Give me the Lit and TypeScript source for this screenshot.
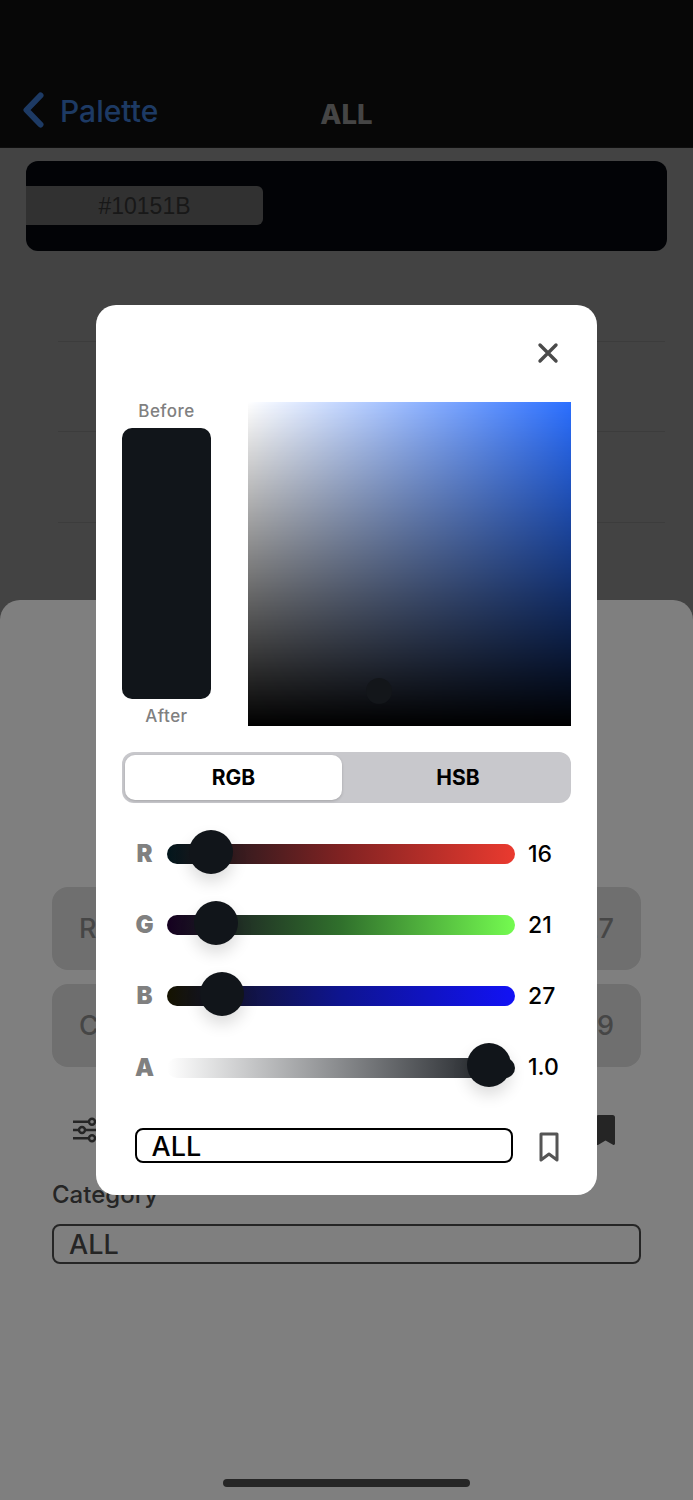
import { LitElement, html, css, svg } from "lit";
import { customElement } from "lit/decorators.js";

interface Channel { label: string; value: string; stops: string; thumb: number; }

const CHANNELS: Channel[] = [
  { label: "R", value: "16", stops: "#02161c, #802222 50%, #ea3a2f", thumb: 44 },
  { label: "G", value: "21", stops: "#150020, #30702c 50%, #74fb50", thumb: 49 },
  { label: "B", value: "27", stops: "#151300, #0e1490 50%, #1212f5", thumb: 55 },
  { label: "A", value: "1.0", stops: "rgba(17,21,26,0), #11151a", thumb: 322 },
];

@customElement("app-root")
export class AppRoot extends LitElement {
  static styles = css`
    :host {
      display: block;
      position: relative;
      width: 693px;
      height: 1500px;
      overflow: hidden;
      background: #868686;
      font-family: Inter, "Noto Sans", sans-serif;
      color: #000;
    }
    .nav {
      background: #0e0e0e;
      border-bottom: 1px solid #1c1c1c;
      position: relative;
      display: flex;
      align-items: flex-end;
      padding: 0 0 18px 22px;
      height: 129px;
      gap: 15px;
    }
    .nav svg { display: block; margin-bottom: 1px; }
    .back { font-size: 30px; line-height: 36px; font-weight: 500; color: #3b74c8; }
    .title {
      position: absolute;
      left: 0;
      right: 0;
      bottom: 17px;
      text-align: center;
      font-size: 27.5px;
      line-height: 32px;
      font-weight: 800;
      color: #8a8a8a;
    }
    .hex-card {
      margin: 13px 26px 0;
      height: 90px;
      border-radius: 12px;
      background: #04060c;
      display: flex;
      align-items: center;
    }
    .chip {
      width: 237px;
      height: 39px;
      box-sizing: border-box;
      padding-top: 2px;
      margin-bottom: 1px;
      border-radius: 0 6px 6px 0;
      background: #636363;
      display: flex;
      align-items: center;
      justify-content: center;
      font-family: "Liberation Sans", Arial, sans-serif;
      font-size: 23px;
      color: #303030;
    }
    .row {
      height: 90.5px;
      margin-left: 58px;
      margin-right: 28px;
      box-sizing: border-box;
      border-bottom: 1px solid #787878;
    }
    .sheet {
      position: absolute;
      left: 0;
      right: 0;
      top: 600px;
      bottom: 0;
      background: #ffffff;
      border-radius: 20px 20px 0 0;
      box-sizing: border-box;
      padding: 287px 52px 0;
      display: flex;
      flex-direction: column;
    }
    .info {
      height: 83px;
      margin-bottom: 14px;
      border-radius: 16px;
      background: #dedede;
      display: flex;
      align-items: center;
      justify-content: space-between;
      padding: 0 27px;
      font-size: 27px;
      font-weight: 500;
      color: #8c8c8c;
    }
    .tools {
      display: flex;
      justify-content: space-between;
      align-items: center;
      height: 31px;
      margin-top: 33px;
      padding: 0 26px 0 21px;
    }
    .tools svg { display: block; }
    .cat-label {
      margin-top: 36px;
      font-size: 24px;
      line-height: 28px;
      font-weight: 500;
      color: #4a4a4a;
    }
    .field {
      box-sizing: border-box;
      border: 2px solid #4a4a4a;
      border-radius: 8px;
      height: 40px;
      margin-top: 15px;
      padding-left: 15px;
      font-size: 27px;
      line-height: 37px;
      font-weight: 500;
      color: #4a4a4a;
    }
    .home {
      position: absolute;
      left: 223px;
      bottom: 13px;
      width: 247px;
      height: 8.5px;
      border-radius: 4.25px;
      background: #4c4c4c;
    }
    .scrim {
      position: absolute;
      inset: 0;
      background: rgba(0, 0, 0, 0.5);
    }
    .modal {
      position: absolute;
      left: 96px;
      top: 305px;
      width: 501px;
      height: 890px;
      box-sizing: border-box;
      background: #fff;
      border-radius: 20px;
      padding: 35px 26px 0;
      display: flex;
      flex-direction: column;
    }
    .close {
      align-self: flex-end;
      margin-right: 10px;
      height: 26px;
    }
    .close svg { display: block; }
    .pick {
      margin-top: 36px;
      display: grid;
      grid-template-columns: 89px 323.5px;
      justify-content: space-between;
    }
    .swatch-col {
      display: flex;
      flex-direction: column;
      align-items: center;
    }
    .cap {
      font-size: 17px;
      line-height: 18px;
      font-weight: 500;
      color: #808080;
      letter-spacing: 0.45px;
    }
    .swatch {
      width: 89px;
      height: 271px;
      margin: 8px 0;
      border-radius: 10px;
      background: #11151a;
    }
    .square {
      position: relative;
      width: 323.5px;
      height: 323.5px;
      background:
        linear-gradient(to bottom, rgba(0,0,0,0), #000),
        linear-gradient(to right, #fff, #2b6fff);
    }
    .cursor {
      position: absolute;
      left: 118.500px;
      top: 276px;
      width: 26px;
      height: 26px;
      border-radius: 50%;
      background: #13161a;
    }
    .segment {
      margin-top: 26.5px;
      height: 51px;
      box-sizing: border-box;
      padding: 3px;
      border-radius: 12px;
      background: #c8c8cc;
      display: grid;
      grid-template-columns: 217px 1fr;
      font-size: 21px;
      font-weight: 700;
    }
    .segment div {
      display: flex;
      align-items: center;
      justify-content: center;
    }
    .segment .off { padding-left: 6px; }
    .segment .on {
      background: #fff;
      border-radius: 10px;
      box-shadow: 0 1px 3px rgba(0,0,0,0.18);
    }
    .channels {
      margin-top: 15.5px;
      display: flex;
      flex-direction: column;
      padding-left: 12px;
    }
    .channel {
      height: 71.2px;
      display: grid;
      grid-template-columns: 33px 348px auto;
      align-items: center;
    }
    .ch-label {
      width: 21px;
      text-align: center;
      font-size: 24px;
      font-weight: 900;
      color: #808080;
      line-height: 1;
    }
    .track {
      position: relative;
      height: 20px;
      border-radius: 10px;
    }
    .thumb {
      position: absolute;
      top: -14.500px;
      width: 44px;
      height: 44px;
      margin-left: -22px;
      border-radius: 50%;
      background: #11151a;
      box-shadow: 0 8px 16px rgba(0,0,0,0.14);
    }
    .ch-value {
      padding-left: 13px;
      font-size: 23px;
      font-weight: 500;
      line-height: 1;
    }
    .save {
      margin-top: 25px;
      padding: 0 12.500px 0 13px;
      display: flex;
      align-items: center;
      justify-content: space-between;
    }
    .name {
      box-sizing: border-box;
      width: 378px;
      height: 35px;
      border: 2px solid #000;
      border-radius: 8px;
      padding-left: 14.500px;
      font-size: 27px;
      line-height: 33px;
      font-weight: 500;
    }
    .save svg { display: block; margin-top: 3px; }
  `;

  private slidersIcon() {
    return svg`<svg width="26" height="26" viewBox="0 0 26 26" fill="none" stroke="#4a4a4a" stroke-width="2.400">
      <path d="M0 4.700h16M0 13h6M12 13h14M0 21.300h16"/>
      <circle cx="19" cy="4.700" r="3"/><circle cx="9" cy="13" r="3"/><circle cx="19" cy="21.300" r="3"/>
    </svg>`;
  }

  render() {
    return html`
      <div class="nav">
        <svg width="23" height="36" viewBox="0 0 23 36" fill="none" stroke="#3b74c8" stroke-width="6" stroke-linecap="round" stroke-linejoin="round"><path d="M18.5 3.5 4.5 18l14 14.5"/></svg>
        <span class="back">Palette</span>
        <span class="title">ALL</span>
      </div>
      <div class="hex-card"><div class="chip">#10151B</div></div>
      <div class="row"></div>
      <div class="row"></div>
      <div class="row"></div>

      <div class="sheet">
        <div class="info"><span>RGB</span><span>27</span></div>
        <div class="info"><span>CMYK</span><span>89</span></div>
        <div class="tools">
          ${this.slidersIcon()}
          <svg width="19" height="30" viewBox="0 0 19 30" fill="#4a4a4a"><path d="M2.5 0h14A2.5 2.5 0 0 1 19 2.5v26c0 1.2-1 1.8-2 1.2L9.500 25.500 2 30c-1 .5-2-.2-2-1.300V2.500A2.500 2.500 0 0 1 2.500 0z"/></svg>
        </div>
        <div class="cat-label">Category</div>
        <div class="field">ALL</div>
      </div>
      <div class="home"></div>
      <div class="scrim"></div>

      <div class="modal">
        <div class="close">
          <svg width="26" height="26" viewBox="0 0 26 26" fill="none" stroke="#4a4a4a" stroke-width="3.400" stroke-linecap="round"><path d="M5 5l16 16M21 5 5 21"/></svg>
        </div>
        <div class="pick">
          <div class="swatch-col">
            <div class="cap">Before</div>
            <div class="swatch"></div>
            <div class="cap">After</div>
          </div>
          <div class="square"><div class="cursor"></div></div>
        </div>
        <div class="segment"><div class="on">RGB</div><div class="off">HSB</div></div>
        <div class="channels">
          ${CHANNELS.map(
            (c) => html`
              <div class="channel">
                <div class="ch-label">${c.label}</div>
                <div class="track" style="background: linear-gradient(to right, ${c.stops})">
                  <div class="thumb" style="left: ${c.thumb}px"></div>
                </div>
                <div class="ch-value">${c.value}</div>
              </div>
            `
          )}
        </div>
        <div class="save">
          <div class="name">ALL</div>
          <svg width="20" height="30" viewBox="0 0 20 30" fill="none" stroke="#555" stroke-width="3" stroke-linejoin="round"><path d="M2 2h16v26l-8-6-8 6z"/></svg>
        </div>
      </div>
    `;
  }
}
